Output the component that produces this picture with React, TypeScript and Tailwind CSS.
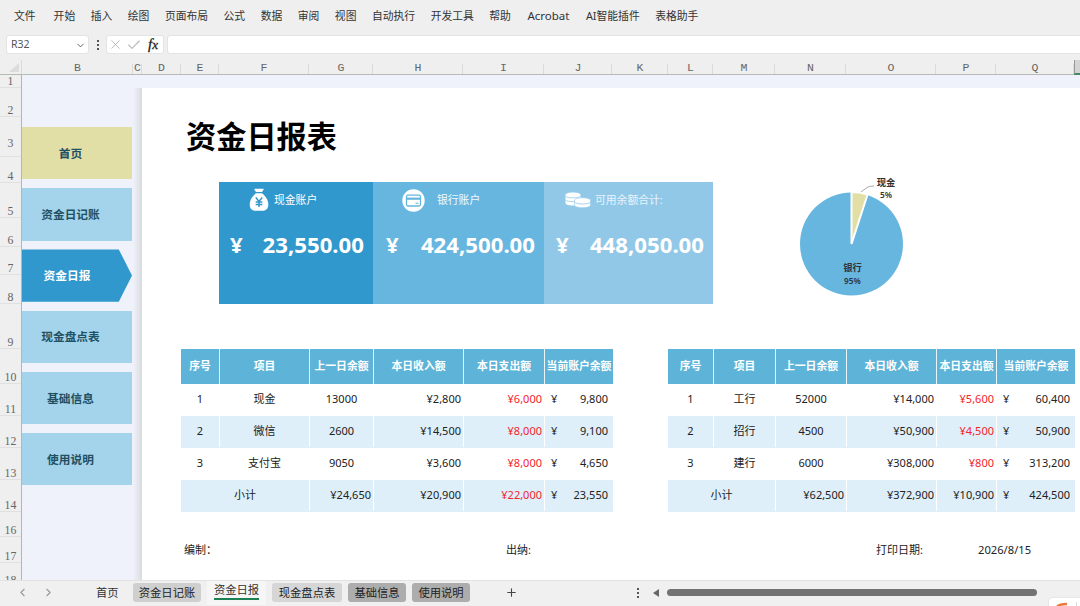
import clsx from "clsx";
import { Check, ChevronDown, ChevronLeft, ChevronRight, Plus, X } from "lucide-react";

const menus = [
  "开始", "插入", "绘图", "页面布局", "公式", "数据", "审阅", "视图",
  "自动执行", "开发工具", "帮助", "Acrobat", "AI智能插件", "表格助手",
];

const columns = [
  { name: "B", width: 111 },
  { name: "C", width: 9 },
  { name: "D", width: 39 },
  { name: "E", width: 38 },
  { name: "F", width: 90 },
  { name: "G", width: 64 },
  { name: "H", width: 90 },
  { name: "I", width: 81 },
  { name: "J", width: 68 },
  { name: "K", width: 56 },
  { name: "L", width: 45 },
  { name: "M", width: 62 },
  { name: "N", width: 71 },
  { name: "O", width: 90 },
  { name: "P", width: 60 },
  { name: "Q", width: 78 },
];

const rows = [
  { name: "1", height: 13 },
  { name: "2", height: 29 },
  { name: "3", height: 40, raised: true },
  { name: "4", height: 26 },
  { name: "5", height: 35 },
  { name: "6", height: 29 },
  { name: "7", height: 28 },
  { name: "8", height: 29 },
  { name: "9", height: 45 },
  { name: "10", height: 35 },
  { name: "11", height: 32 },
  { name: "12", height: 32 },
  { name: "13", height: 32 },
  { name: "14", height: 32 },
  { name: "16", height: 25 },
  { name: "17", height: 26 },
  { name: "18", height: 24 },
];

const navItems = ["首页", "资金日记账", "资金日报", "现金盘点表", "基础信息", "使用说明"];

const heads = ["序号", "项目", "上一日余额", "本日收入额", "本日支出额", "当前账户余额"];

interface Account {
  name: string;
  previous: string;
  income: string;
  expense: string;
  balance: string;
}

const cashAccounts: Account[] = [
  { name: "现金", previous: "13000", income: "¥2,800", expense: "¥6,000", balance: "9,800" },
  { name: "微信", previous: "2600", income: "¥14,500", expense: "¥8,000", balance: "9,100" },
  { name: "支付宝", previous: "9050", income: "¥3,600", expense: "¥8,000", balance: "4,650" },
];

const bankAccounts: Account[] = [
  { name: "工行", previous: "52000", income: "¥14,000", expense: "¥5,600", balance: "60,400" },
  { name: "招行", previous: "4500", income: "¥50,900", expense: "¥4,500", balance: "50,900" },
  { name: "建行", previous: "6000", income: "¥308,000", expense: "¥800", balance: "313,200" },
];

const MenuBar = () => (
  <div className="flex h-[35px] shrink-0 items-center pb-[3px] pl-[14px] text-[10.8px] text-[#333]">
    <span className="mr-[18px]">文件</span>
    <div className="flex gap-[15.5px]">
      {menus.map((item) => (
        <span key={item} className={clsx(item === "Acrobat" && "mx-[1px] text-[11.5px] leading-[16px]")}>
          {item}
        </span>
      ))}
    </div>
  </div>
);

const FormulaBar = () => (
  <div className="flex h-[25px] shrink-0 items-start pl-[6px]">
    <div className="flex h-[19px] w-[83px] items-center justify-between rounded-[3px] border border-[#e4e4e4] bg-white pr-[2px] pl-[4px] text-[10.5px] text-[#555]">
      R32
      <ChevronDown className="mt-px h-[11px] w-[11px] text-[#555]" />
    </div>
    <div className="flex h-[19px] w-[17px] flex-col items-center justify-center gap-[2px]">
      <i className="h-[2px] w-[2px] bg-[#555]" />
      <i className="h-[2px] w-[2px] bg-[#555]" />
      <i className="h-[2px] w-[2px] bg-[#555]" />
    </div>
    <div className="flex h-[19px] w-[58px] items-center rounded-[3px] border border-[#e4e4e4] bg-white pl-[1px]">
      <X className="h-[15px] w-[15px] text-[#bbb]" strokeWidth={1.5} />
      <Check className="ml-[3px] h-[16px] w-[16px] text-[#bbb]" strokeWidth={1.7} />
      <span className="ml-[6px] font-['Liberation_Serif',serif] text-[15px] leading-none text-[#222] italic [-webkit-text-stroke:0.3px_#222]">
        f<span className="text-[13px]">x</span>
      </span>
    </div>
    <div className="ml-[3px] h-[19px] flex-1 rounded-l-[3px] border border-r-0 border-[#e4e4e4] bg-white" />
  </div>
);

const ColumnHeader = () => (
  <div className="flex h-[15px] shrink-0 border-b border-[#b4bcb4] font-['Liberation_Mono',monospace] text-[11.5px] leading-[16px] text-[#666]">
    <div className="flex w-[22px] items-end justify-end border-r border-[#dadada] pr-[2px] pb-[2px]">
      <svg width="10" height="9" viewBox="0 0 10 9">
        <path d="M10 0V9H0Z" fill="#dcdcdc" />
      </svg>
    </div>
    {columns.map((col) => (
      <div
        key={col.name}
        className="flex justify-center bg-linear-to-b from-transparent from-30% to-[#dadada] to-30% bg-[length:1px_100%] bg-right bg-no-repeat"
        style={{ width: col.width }}
      >
        {col.name}
      </div>
    ))}
    <div className="h-[15px] flex-1 border-b-2 border-l border-b-[#3f8a66] border-l-[#999] bg-[#d4d4d4]" />
  </div>
);

const RowHeader = () => (
  <div className="flex w-[22px] shrink-0 flex-col overflow-hidden border-r border-[#b5b5b5] bg-[#efefef] font-['Liberation_Serif',serif] text-[11.8px] leading-[11px] text-[#666]">
    {rows.map((row) => (
      <div
        key={row.name}
        className={clsx(
          "flex shrink-0 items-end justify-center border-b border-[#e0e0e0]",
          row.raised && "pb-[7px]"
        )}
        style={{ height: row.height }}
      >
        {row.name}
      </div>
    ))}
  </div>
);

const NavItem = ({ label }: { label: string }) => {
  if (label === "资金日报") {
    return (
      <div className="flex h-[52.4px] items-center justify-center bg-[#3198cd] pt-px pr-[20px] text-white [clip-path:polygon(0_0,88%_0,100%_50%,88%_100%,0_100%)]">
        {label}
      </div>
    );
  }
  return (
    <div
      className={clsx(
        "flex h-[52.4px] items-center justify-center pt-px pr-[13px] text-[#1f5063]",
        label === "首页" ? "bg-[#e2dfa6]" : "bg-[#a3d4eb]"
      )}
    >
      {label}
    </div>
  );
};

const SideNav = () => (
  <nav className="flex w-[111px] shrink-0 flex-col gap-[8.8px] pt-[52px] pr-[1px] text-[11.7px] font-bold">
    {navItems.map((item) => (
      <NavItem key={item} label={item} />
    ))}
  </nav>
);

const MoneyBagIcon = () => (
  <svg width="20" height="24" viewBox="0 0 20 24" fill="none">
    <path d="M6 .8h8c.7 0 .9.5.5 1L13 4H7L5.5 1.800C5.100 1.300 5.300.8 6 .8Z" fill="#fff" />
    <path d="M7 5.200h6c3.200 2.400 6.300 6.800 6.300 11.200 0 4.300-2.500 6.400-6.300 6.400H7C3.200 22.800.7 20.700.7 16.400.7 12 3.800 7.600 7 5.200Z" fill="#fff" />
    <path d="M6.800 9.500 10 13.400l3.200-3.900M10 13.400V19M6.700 13.900h6.600M6.700 16.400h6.600" stroke="#3198cd" strokeWidth="1.500" />
  </svg>
);

const CardIcon = () => (
  <svg width="23" height="23" viewBox="0 0 23 23" fill="none">
    <circle cx="11.5" cy="11.5" r="11.200" fill="#fff" />
    <rect x="4.500" y="6.200" width="14" height="10.800" rx="1.500" stroke="#67b6df" strokeWidth="1.300" />
    <path d="M4.500 9.700h14" stroke="#67b6df" strokeWidth="2.200" />
    <path d="M13.500 14.300h3" stroke="#67b6df" strokeWidth="1" />
  </svg>
);

const CoinsIcon = () => (
  <svg width="26" height="17" viewBox="0 0 26 17" fill="none">
    <path d="M.5 3C.5 1.300 4 .5 8 .5s7.500.8 7.500 2.500v8c0 1.700-3.500 2.500-7.500 2.500S.5 12.700.5 11Z" fill="#fff" />
    <path d="M.3 4.200c2 2.200 13 2.200 15.400 0M.3 8c2 2.200 13 2.200 15.400 0" stroke="#92c8e7" strokeWidth=".8" />
    <path d="M9.500 8.500c0-1.700 3.500-2.700 8-2.700s8 1 8 2.700V13c0 1.700-3.500 2.700-8 2.700s-8-1-8-2.700Z" fill="#fff" stroke="#92c8e7" strokeWidth=".6" />
    <path d="M9.500 10.300c3 2.300 13 2.300 16 0" stroke="#92c8e7" strokeWidth=".8" />
  </svg>
);

const SummaryCards = () => (
  <div className="flex h-[122px] w-[494px] text-white">
    <div className="w-[154px] bg-[#3198cd]">
      <div className="flex h-[36px] items-center pl-[30px] text-[10.8px]">
        <MoneyBagIcon />
        <span className="ml-[5px]">现金账户</span>
      </div>
      <div className="mt-[15px] flex justify-between pr-[9px] pl-[11px] text-[22.2px] leading-[24px] font-bold">
        <span>¥</span>
        <span>23,550.00</span>
      </div>
    </div>
    <div className="w-[171px] bg-[#67b6df]">
      <div className="flex h-[36px] items-center pl-[29px] text-[10.8px] text-[#f2f9fd]">
        <CardIcon />
        <span className="ml-[12px]">银行账户</span>
      </div>
      <div className="mt-[15px] flex justify-between pr-[9px] pl-[13px] text-[22.2px] leading-[24px] font-bold">
        <span>¥</span>
        <span>424,500.00</span>
      </div>
    </div>
    <div className="w-[169px] bg-[#92c8e7]">
      <div className="flex h-[36px] items-center pl-[21px] text-[10.8px] text-[#e6f4fc]">
        <CoinsIcon />
        <span className="ml-[4px]">可用余额合计:</span>
      </div>
      <div className="mt-[15px] flex justify-between pr-[9px] pl-[12px] text-[22.2px] leading-[24px] font-bold">
        <span>¥</span>
        <span>448,050.00</span>
      </div>
    </div>
  </div>
);

const PieChart = () => (
  <svg width="120" height="130" viewBox="795 170 120 130" className="text-[9.3px] font-bold" fill="#333">
    <circle cx="851.5" cy="244" r="51.5" fill="#67b6df" />
    <path d="M851.5 244V192A52 52 0 0 1 867.600 194.500Z" fill="#e2dfa6" stroke="#fff" strokeWidth="2" />
    <path d="M861 192l6-4.500q2-1.500 7-1.500" fill="none" stroke="#aaa" strokeWidth="1" />
    <text x="886" y="185.500" textAnchor="middle">现金</text>
    <text x="886" y="198" textAnchor="middle" className="text-[8.300px] font-semibold">5%</text>
    <text x="852.5" y="271" textAnchor="middle">银行</text>
    <text x="852.5" y="283.500" textAnchor="middle" className="text-[8.300px] font-semibold">95%</text>
  </svg>
);

interface AccountTableProps {
  accounts: Account[];
  total: Account;
  className: string;
  redTotal?: boolean;
}

const AccountTable = ({ accounts, total, className, redTotal }: AccountTableProps) => {
  const balance = (value: string) => (
    <div className="flex items-center justify-between pr-[5px] pl-[6px]">
      <span>¥</span>
      <span>{value}</span>
    </div>
  );

  return (
    <div className="text-[11px] text-[#222]">
      <div className={clsx("grid h-[35px] divide-x divide-[#e8f6fc] bg-[#5eb4d8] text-[10.8px] font-bold text-white", className)}>
        {heads.map((head) => (
          <div key={head} className="flex items-center justify-center whitespace-nowrap">
            {head}
          </div>
        ))}
      </div>
      {accounts.map((item, i) => (
        <div
          key={item.name}
          className={clsx("grid h-[32px] divide-x divide-white pb-px", i % 2 === 1 && "bg-[#deeffa]", className)}
        >
          <div className="flex items-center justify-center">{i + 1}</div>
          <div className="flex items-center justify-center">{item.name}</div>
          <div className="flex items-center justify-center">{item.previous}</div>
          <div className="flex items-center justify-end pr-[2px]">{item.income}</div>
          <div className="flex items-center justify-end pr-[2px] text-[#f5232b]">{item.expense}</div>
          {balance(item.balance)}
        </div>
      ))}
      <div className={clsx("grid h-[32px] divide-x divide-white bg-[#deeffa] pb-px", className)}>
        <div className="col-span-2 flex items-center justify-center">{total.name}</div>
        <div className="flex items-center justify-end pr-[2px]">{total.previous}</div>
        <div className="flex items-center justify-end pr-[2px]">{total.income}</div>
        <div className={clsx("flex items-center justify-end pr-[2px]", redTotal && "text-[#f5232b]")}>
          {total.expense}
        </div>
        {balance(total.balance)}
      </div>
    </div>
  );
};

const Report = () => (
  <main className="flex min-w-0 flex-1 flex-col overflow-hidden bg-white">
    <h1 className="mt-[26px] ml-[44px] h-[46px] text-[30.2px] leading-[46px] font-bold text-black">资金日报表</h1>
    <div className="flex h-[189px] items-start">
      <div className="mt-[22px] ml-[77px]">
        <SummaryCards />
      </div>
      <div className="mt-[10px] ml-[82px]">
        <PieChart />
      </div>
    </div>
    <div className="flex pl-[39px]">
      <AccountTable
        accounts={cashAccounts}
        total={{ name: "小计", previous: "¥24,650", income: "¥20,900", expense: "¥22,000", balance: "23,550" }}
        className="grid-cols-[39px_90px_64px_90px_81px_68px]"
        redTotal
      />
      <div className="w-[55px]" />
      <AccountTable
        accounts={bankAccounts}
        total={{ name: "小计", previous: "¥62,500", income: "¥372,900", expense: "¥10,900", balance: "424,500" }}
        className="grid-cols-[46px_62px_71px_90px_60px_78px]"
      />
    </div>
    <div className="mt-[30px] flex pl-[42px] text-[11px] leading-[16px] text-[#222]">
      <span className="w-[322px]">编制：</span>
      <span className="w-[370px]">出纳:</span>
      <span className="w-[102px]">打印日期:</span>
      <span className="text-[11.2px]">2026/8/15</span>
    </div>
  </main>
);

const SheetTabs = () => (
  <footer className="relative flex h-[26px] shrink-0 items-center overflow-hidden border-t border-[#e2e2e2] bg-[#f0f0f0] pb-[2px] text-[11.3px] leading-[19px] text-[#222]">
    <ChevronLeft className="ml-[16px] h-[13px] w-[13px] text-[#999]" strokeWidth={2} />
    <ChevronRight className="ml-[13px] h-[13px] w-[13px] text-[#999]" strokeWidth={2} />
    <span className="ml-[41px] w-[32px] text-[#333]">首页</span>
    <span className="ml-[5px] flex h-[19px] w-[68px] items-center justify-center rounded-[3px] bg-[#cfcfcf]">
      资金日记账
    </span>
    <span className="ml-[6px] flex h-[25px] w-[59px] items-start justify-center bg-[#f6f6f6]">
      <span className="h-[20px] border-b-2 border-[#1e8055] text-[#333]">资金日报</span>
    </span>
    <span className="ml-[6px] flex h-[19px] w-[70px] items-center justify-center rounded-[3px] bg-[#d6d6d6]">
      现金盘点表
    </span>
    <span className="ml-[6px] flex h-[19px] w-[58px] items-center justify-center rounded-[3px] bg-[#adadad]">
      基础信息
    </span>
    <span className="ml-[6px] flex h-[19px] w-[58px] items-center justify-center rounded-[3px] bg-[#adadad]">
      使用说明
    </span>
    <Plus className="ml-[35px] h-[13px] w-[13px] text-[#444]" strokeWidth={2} />
    <div className="ml-[118px] flex w-[3px] flex-col items-center gap-[2px]">
      <i className="h-[2px] w-[2px] bg-[#555]" />
      <i className="h-[2px] w-[2px] bg-[#555]" />
      <i className="h-[2px] w-[2px] bg-[#555]" />
    </div>
    <svg width="6" height="8" viewBox="0 0 6 8" className="ml-[14px]">
      <path d="M6 0V8L0 4Z" fill="#666" />
    </svg>
    <div className="ml-[8px] h-[7px] w-[370px] rounded-full bg-[#737373]" />
    <div className="absolute top-[16px] left-[1048px] h-[20px] w-[40px] rounded-[4px] border border-[#e6e6e6] bg-white">
      <svg width="30" height="10" viewBox="0 0 30 10" fill="none">
        <path d="M8 9C10 6.500 13 6 18 6" stroke="#e8793a" strokeWidth="2.500" />
        <path d="M27.500 4V10" stroke="#ddd" />
      </svg>
    </div>
  </footer>
);

export default function App() {
  return (
    <div className="flex h-[606px] w-[1080px] flex-col overflow-hidden bg-[#efefef] font-['Noto_Sans','Noto_Sans_CJK_SC',sans-serif]">
      <MenuBar />
      <FormulaBar />
      <ColumnHeader />
      <div className="flex h-[505px] shrink-0 bg-[#eff2fb]">
        <RowHeader />
        <SideNav />
        <div className="flex min-w-0 flex-1 pt-[13px]">
          <div className="w-[9px] shrink-0 bg-linear-to-r from-[#eff2fb] to-[#d9dcde]" />
          <Report />
        </div>
      </div>
      <SheetTabs />
    </div>
  );
}
